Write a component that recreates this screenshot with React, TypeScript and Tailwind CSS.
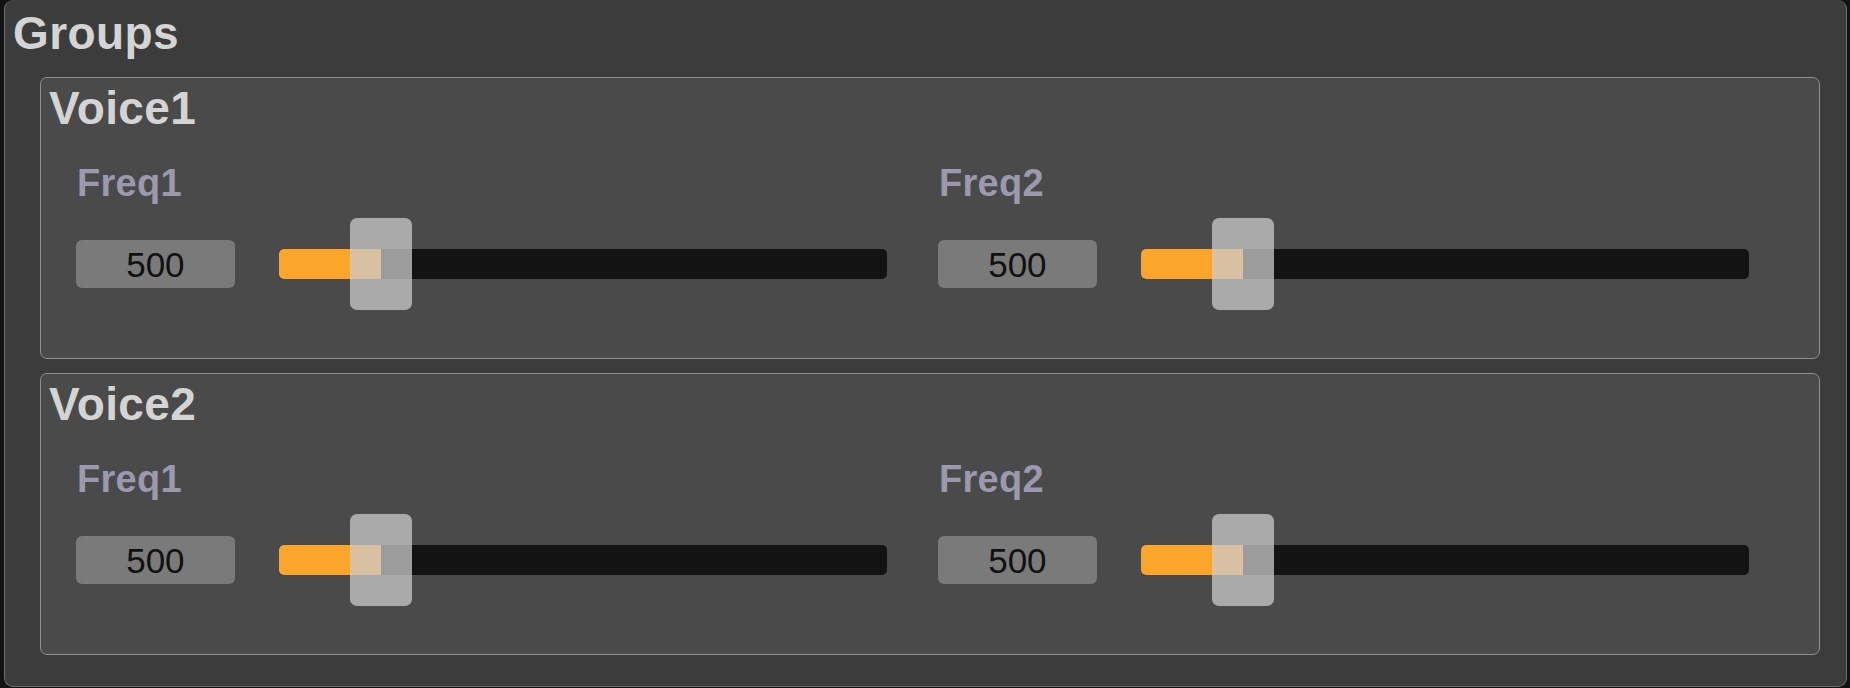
const font = { fontFamily: '"Liberation Sans", Arial, sans-serif' };

function Slider({ pct }: { pct: number }) {
  return (
    <div className="relative flex h-[92px] w-[609px] items-center">
      <div className="relative h-[30px] w-full overflow-hidden rounded-[5px] bg-[#131313]">
        <div className="h-full bg-[#fba52b]" style={{ width: `${pct}%` }} />
      </div>
      <div
        className="absolute top-0 h-[92px] w-[62px] rounded-[7px] bg-[rgba(203,203,203,0.75)]"
        style={{ left: `calc(${pct}% - 31px)` }}
      />
    </div>
  );
}

function Param({ label }: { label: string }) {
  return (
    <div className="flex w-[811px] flex-col">
      <div className="pl-[1px] text-[38px] font-bold leading-none tracking-[0.3px] text-[#9c99ae]">{label}</div>
      <div className="mt-[16px] flex items-center gap-[44px]">
        <div className="flex h-[48px] w-[159px] items-center justify-center rounded-[6px] bg-[#7a7a7a] text-[35px] leading-none text-[#111]">
          500
        </div>
        <Slider pct={16.8} />
      </div>
    </div>
  );
}

function Voice({ name }: { name: string }) {
  return (
    <div className="h-[282px] rounded-[7px] border border-[#8e8e8e] bg-[#4a4a4a] pl-[35px] pt-[7px]">
      <div className="-ml-[27px] text-[46px] font-bold leading-none tracking-[0.4px] text-[#d4d4d4]">{name}</div>
      <div className="mt-[33px] flex gap-[51px]">
        <Param label="Freq1" />
        <Param label="Freq2" />
      </div>
    </div>
  );
}

export default function App() {
  return (
    <div className="h-[688px] w-[1850px] overflow-hidden bg-[#121212]" style={font}>
      <div className="ml-[4px] h-[687px] w-[1843px] rounded-b-[9px] rounded-t-[9px] border-x border-b border-[#6e6e6e] bg-[#3c3c3c] pb-[30px] pt-[10px]">
        <div className="pl-[8px] text-[46px] font-bold leading-none tracking-[0.4px] text-[#d4d4d4]">Groups</div>
        <div className="ml-[35px] mr-[26px] mt-[21px] flex flex-col gap-[14px]">
          <Voice name="Voice1" />
          <Voice name="Voice2" />
        </div>
      </div>
    </div>
  );
}
